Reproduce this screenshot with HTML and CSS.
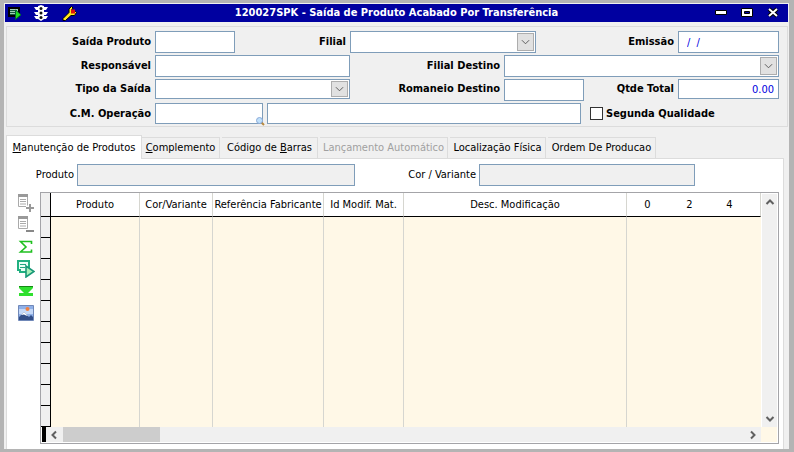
FILE: index.html
```html
<!DOCTYPE html>
<html lang="pt-BR">
<head>
<meta charset="utf-8">
<title>120027SPK - Saída de Produto Acabado Por Transferência</title>
<link rel="stylesheet" href="styles.css">
</head>
<body>
<main class="window">
  <header class="titlebar">
    <div class="title-tools">
      <button type="button" aria-label="Executar"><svg width="14" height="14" viewBox="0 0 14 14"><path d="M1 2h10v8H1z" fill="#9fd0b8" stroke="#000" stroke-width="2"/><path d="M2 4.500h7M2 6.500h6M2 8.500h5" stroke="#175c40"/><path d="M7.500 4v9.500l5.500-4.700z" fill="#1fe01f" stroke="#063"/></svg></button>
      <button type="button" aria-label="Semáforo"><svg width="14" height="16" viewBox="0 0 14 16"><path d="M4 1l3-1 3 1v1h4l-2 3h-2v2h4l-2 3h-2v1h4l-2 3h-2l-3 2-3-2H2l-2-3h4v-1H2L0 7h4V5H2L0 2h4z" fill="#fff"/><g fill="#111"><circle cx="7" cy="3.500" r="1.500"/><circle cx="7" cy="8" r="1.500"/><circle cx="7" cy="12.500" r="1.500"/></g></svg></button>
      <button type="button" aria-label="Configurar"><svg width="15" height="15" viewBox="0 0 15 15"><path d="M1 12.500L7 6.500V3l2.500-2.500L11 2 9.500 4v2.500H12l1.500-1 1 1-2 3H9L3.500 14.500H1z" fill="#ffe81c" stroke="#000"/><path d="M9 3.500h4v4H9z" fill="#e01010"/></svg></button>
    </div>
    <h1>120027SPK - Saída de Produto Acabado Por Transferência</h1>
    <div class="title-controls">
      <button type="button" aria-label="Minimizar"><svg width="12" height="12" viewBox="0 0 12 12"><path d="M.5 3.500h11v4H.5z" fill="#fff" stroke="#000"/></svg></button>
      <button type="button" aria-label="Maximizar"><svg width="12" height="12" viewBox="0 0 12 12"><path d="M.5 1.500h11v8H.5z" fill="#fff" stroke="#000"/><path d="M3.500 4.500h5v2h-5z" fill="#0000a0" stroke="#000"/></svg></button>
      <button type="button" aria-label="Fechar"><svg width="12" height="12" viewBox="0 0 12 12"><path d="M2 2l8 7M10 2l-8 7" stroke="#000" stroke-width="4"/><path d="M2 2l8 7M10 2l-8 7" stroke="#fff" stroke-width="2"/></svg></button>
    </div>
  </header>

  <form class="header-form">
    <div class="row row-first">
      <label for="saida">Saída Produto</label><input id="saida" type="text">
      <label for="filial">Filial</label>
      <div class="combo"><select id="filial"></select><svg width="10" height="6" viewBox="0 0 10 6"><path d="M1 1l4 4 4-4"/></svg></div>
      <label for="emissao">Emissão</label><input id="emissao" class="date" type="text" value="/  /">
    </div>
    <div class="row row-second">
      <label for="resp">Responsável</label><input id="resp" type="text">
      <label for="destino">Filial Destino</label>
      <div class="combo"><select id="destino"></select><svg width="10" height="6" viewBox="0 0 10 6"><path d="M1 1l4 4 4-4"/></svg></div>
    </div>
    <div class="row row-third">
      <label for="tipo">Tipo da Saída</label>
      <div class="combo"><select id="tipo"></select><svg width="10" height="6" viewBox="0 0 10 6"><path d="M1 1l4 4 4-4"/></svg></div>
      <label for="romaneio">Romaneio Destino</label><input id="romaneio" type="text">
      <label for="qtde">Qtde Total</label><input id="qtde" class="total" type="text" value="0.00">
    </div>
    <div class="row row-fourth">
      <label for="operacao">C.M. Operação</label>
      <div class="lookup"><input id="operacao" type="text"><svg width="9" height="9" viewBox="0 0 9 9"><path d="M5 5l3 3" stroke="#b88a40" stroke-width="2"/><circle cx="3.500" cy="3.500" r="3" fill="#bfe0fa" stroke="#8aa8d8"/></svg></div>
      <input type="text" aria-label="Descrição da operação">
      <div class="check"><input id="segunda" type="checkbox"><label for="segunda">Segunda Qualidade</label></div>
    </div>
  </form>

  <nav class="tabs" role="tablist">
    <button type="button" role="tab" class="tab active" aria-selected="true"><u>M</u>anutenção de Produtos</button>
    <button type="button" role="tab" class="tab tab-short"><u>C</u>omplemento</button>
    <button type="button" role="tab" class="tab tab-medium">Código de <u>B</u>arras</button>
    <button type="button" role="tab" class="tab tab-long" disabled>Lançamento Automático</button>
    <button type="button" role="tab" class="tab tab-medium">Localização Física</button>
    <button type="button" role="tab" class="tab tab-wide">Ordem De Producao</button>
  </nav>

  <section class="panel" role="tabpanel">
    <div class="filters">
      <label for="produto">Produto</label><input id="produto" type="text" readonly>
      <label for="cor">Cor / Variante</label><input id="cor" type="text" readonly>
    </div>
    <div class="workspace">
      <div class="tools">
        <button type="button" aria-label="Incluir"><svg width="18" height="18" viewBox="0 0 18 18"><path d="M1.500 2.500h9v10h-9z" fill="#fff" stroke="#aaa"/><path d="M1 1.500h10" stroke="#999" stroke-width="3"/><path d="M3 5.500h6M3 7.500h6M3 10h6" stroke="#aaa"/><path d="M9 13.500h8M13.500 9v8" stroke="#fff" stroke-width="4"/><path d="M9 14h8M13 10v8" stroke="#999" stroke-width="2"/></svg></button>
        <button type="button" aria-label="Excluir"><svg width="18" height="18" viewBox="0 0 18 18"><path d="M1.500 2.500h9v10h-9z" fill="#fff" stroke="#aaa"/><path d="M1 1.500h10" stroke="#999" stroke-width="3"/><path d="M3 5.500h6M3 7.500h6M3 10h6" stroke="#aaa"/><path d="M9 15h8" stroke="#888" stroke-width="2"/></svg></button>
        <button type="button" aria-label="Somar"><svg width="18" height="18" viewBox="0 0 18 18"><path d="M14.500 6V3.500h-11L9 9l-5.500 5h11v-2.500" fill="none" stroke="#20c020" stroke-width="1.600"/></svg></button>
        <button type="button" aria-label="Processar"><svg width="18" height="18" viewBox="0 0 18 18"><path d="M1 1h11v11H3V10H1z" fill="#e8fff5" stroke="#20b080" stroke-width="2"/><path d="M3 4.500h6M3 7.500h5" stroke="#20a880"/><path d="M9 6v11l8-5.500z" fill="#a8f0b8" stroke="#189878" stroke-width="1.600"/></svg></button>
        <button type="button" aria-label="Final"><svg width="18" height="18" viewBox="0 0 18 18"><path d="M2 4h14v2l-5 5h5v3H2v-3h5L2 6z" fill="#2fe02f"/><path d="M2 4h14v1H2z" fill="#158815"/></svg></button>
        <button type="button" aria-label="Imagem"><svg width="18" height="18" viewBox="0 0 18 18"><path d="M1.500 1.500h15v15h-15z" fill="#8fb0e8" stroke="#7088b8"/><path d="M2 5h14v5H2z" fill="#c4d8f8"/><circle cx="10.500" cy="5" r="2" fill="#f08040"/><path d="M2 13l5-5 5 5 2-2 2 2v3H2z" fill="#314d88"/><path d="M4 11l3-3 4 4-2-.5-2-1z" fill="#fff"/></svg></button>
      </div>
      <div class="grid">
        <div class="sheet">
          <table>
            <colgroup><col class="c-mark"><col class="c-prod"><col class="c-color"><col class="c-ref"><col class="c-id"><col><col class="c-zero"><col class="c-two"><col class="c-four"><col class="c-end"></colgroup>
            <thead><tr><th class="mark"></th><th>Produto</th><th>Cor/Variante</th><th>Referência Fabricante</th><th>Id Modif. Mat.</th><th>Desc. Modificação</th><th class="size">0</th><th class="size">2</th><th class="size">4</th><th></th></tr></thead>
            <tbody>
              <tr><td class="mark"></td><td></td><td></td><td></td><td></td><td></td><td class="size"></td><td class="size"></td><td class="size"></td><td class="size"></td></tr>
              <tr><td class="mark"></td><td></td><td></td><td></td><td></td><td></td><td class="size"></td><td class="size"></td><td class="size"></td><td class="size"></td></tr>
              <tr><td class="mark"></td><td></td><td></td><td></td><td></td><td></td><td class="size"></td><td class="size"></td><td class="size"></td><td class="size"></td></tr>
              <tr><td class="mark"></td><td></td><td></td><td></td><td></td><td></td><td class="size"></td><td class="size"></td><td class="size"></td><td class="size"></td></tr>
              <tr><td class="mark"></td><td></td><td></td><td></td><td></td><td></td><td class="size"></td><td class="size"></td><td class="size"></td><td class="size"></td></tr>
              <tr><td class="mark"></td><td></td><td></td><td></td><td></td><td></td><td class="size"></td><td class="size"></td><td class="size"></td><td class="size"></td></tr>
              <tr><td class="mark"></td><td></td><td></td><td></td><td></td><td></td><td class="size"></td><td class="size"></td><td class="size"></td><td class="size"></td></tr>
              <tr><td class="mark"></td><td></td><td></td><td></td><td></td><td></td><td class="size"></td><td class="size"></td><td class="size"></td><td class="size"></td></tr>
              <tr><td class="mark"></td><td></td><td></td><td></td><td></td><td></td><td class="size"></td><td class="size"></td><td class="size"></td><td class="size"></td></tr>
              <tr><td class="mark"></td><td></td><td></td><td></td><td></td><td></td><td class="size"></td><td class="size"></td><td class="size"></td><td class="size"></td></tr>
            </tbody>
          </table>
        </div>
        <div class="vscroll">
          <button type="button" aria-label="Rolar para cima"><svg width="10" height="8" viewBox="0 0 10 8"><path d="M1.500 6L5 2.500 8.500 6"/></svg></button>
          <button type="button" aria-label="Rolar para baixo"><svg width="10" height="8" viewBox="0 0 10 8"><path d="M1.500 2L5 5.500 8.500 2"/></svg></button>
        </div>
        <div class="hscroll">
          <button type="button" aria-label="Rolar para a esquerda"><svg width="8" height="10" viewBox="0 0 8 10"><path d="M6 1.500L2.500 5 6 8.500"/></svg></button>
          <div class="track"><div class="thumb"></div></div>
          <button type="button" aria-label="Rolar para a direita"><svg width="8" height="10" viewBox="0 0 8 10"><path d="M2 1.500L5.500 5 2 8.500"/></svg></button>
        </div>
        <div class="corner"></div>
      </div>
    </div>
  </section>
</main>
</body>
</html>
```
FILE: styles.css
```css
* { box-sizing: border-box; }

body {
  margin: 0;
  background: #b4b4b4;
  color: #000;
  font: 11px/14px "DejaVu Sans Condensed", "DejaVu Sans", sans-serif;
}

button, input, select { font: inherit; color: inherit; margin: 0; border-radius: 0; }
button { padding: 0; border: 0; background: none; }
svg { display: block; }

.window {
  min-height: 100vh;
  display: flex;
  flex-direction: column;
  border: solid #b4b4b4;
  border-width: 3px 5px 3px 4px;
  background: #f0f0f0;
}

.titlebar {
  display: grid;
  grid-template-columns: 1fr auto 1fr;
  align-items: center;
  height: 18px;
  margin: 1px 1px 0;
  background: #0000a0;
  color: #fff;
}
.titlebar h1 { margin: 0; font-size: 11px; font-weight: bold; }
.title-tools { display: flex; align-items: center; gap: 12px; padding-left: 3px; }
.title-tools button:last-child { margin-left: 2px; }
.title-controls { display: flex; justify-content: flex-end; gap: 14px; padding-right: 9px; }

.header-form {
  display: flex;
  flex-direction: column;
  gap: 2px;
  margin: 4px 1px 0 2px;
  padding: 4px 8px 2px 0;
  border: 1px solid #dcdcdc;
}
.row { display: grid; align-items: center; column-gap: 4px; }
.row-first { grid-template-columns: 144px 80px 107px 186fr 134fr 101px; }
.row-second { grid-template-columns: 144px 195px 146px 1fr; }
.row-third { grid-template-columns: 144px 195px 146px 80px 1fr 101px; align-items: start; }
.row-fourth { grid-template-columns: 144px 108px 314fr 194fr; }
.row label { font-weight: bold; text-align: right; white-space: nowrap; }
.row-third label { padding-top: 3px; }
.row input[type="text"], .combo select, .filters input {
  display: block;
  width: 100%;
  height: 22px;
  padding: 0 4px;
  border: 1px solid #7f9db9;
  background: #fff;
}
.combo { position: relative; }
.combo select { appearance: none; }
.combo svg {
  position: absolute;
  top: 2px;
  right: 2px;
  bottom: 2px;
  width: 17px;
  height: calc(100% - 4px);
  padding: 3px;
  border: 1px solid #adadad;
  background: #e1e1e1;
  pointer-events: none;
}
.combo path { fill: none; stroke: #505050; stroke-width: 1; }
.row input.date, .row input.total { color: #0000e0; white-space: pre; }
.row input.date { padding-left: 8px; }
.row input.total { text-align: right; }
.row-third input.total, .row-third select { height: 20px; }
.row-fourth input[type="text"] { height: 21px; }
.lookup { position: relative; }
.lookup svg { position: absolute; right: -2px; bottom: -2px; }
.check { display: flex; align-items: center; gap: 3px; padding-left: 5px; }
.check input {
  appearance: none;
  width: 13px;
  height: 13px;
  border: 1px solid #333;
  background: #fff;
}

.tabs { display: flex; align-items: flex-end; gap: 2px; margin: 8px 0 0 2px; }
.tab {
  height: 21px;
  border: solid #dcdcdc;
  border-width: 1px 1px 0 0;
  white-space: nowrap;
}
.tab.active {
  position: relative;
  width: 136px;
  height: 24px;
  margin: 0 -2px -1px 0;
  border-left-width: 1px;
  background: #fff;
}
.tab-short { width: 78px; }
.tab-medium { width: 96px; }
.tab-long { width: 128px; }
.tab-wide { width: 108px; }
.tab:disabled { color: #a0a0a0; }

.panel {
  flex: 1;
  display: flex;
  flex-direction: column;
  margin: 0 5px 0 2px;
  padding: 5px 4px 5px 0;
  border: solid #dcdcdc;
  border-width: 1px 1px 0;
  background: #fff;
}
.filters {
  display: grid;
  grid-template-columns: 67px 278fr 118fr 216fr 81fr;
  column-gap: 3px;
  align-items: center;
}
.filters label { text-align: right; white-space: nowrap; }
.filters input { background: #f0f0f0; }

.workspace { flex: 1; display: flex; margin-top: 6px; }
.tools { display: flex; flex-direction: column; gap: 4px; width: 33px; padding: 2px 0 0 10px; }

.grid {
  flex: 1;
  display: grid;
  grid-template: 1fr 15px / 1fr 17px;
  padding-bottom: 1px;
  border: 1px solid #a4a4a8;
}
.sheet { background: #fff8e7; }
table { width: 100%; border-collapse: separate; border-spacing: 0; table-layout: fixed; }
.c-mark { width: 10px; }
.c-prod { width: 89px; }
.c-color { width: 73px; }
.c-ref { width: 111px; }
.c-id { width: 80px; }
.c-zero { width: 41px; }
.c-two { width: 43px; }
.c-four { width: 37px; }
.c-end { width: 13px; }
th, td { padding: 0; border-right: 1px solid #d6d6d0; }
th {
  height: 24px;
  border-bottom: 1px solid #000;
  background: #fff;
  font-weight: normal;
  white-space: nowrap;
}
td { height: 21px; }
.size { border-right: 0; }
.mark { border-right: 1px solid #000; border-bottom: 1px solid #000; background: #f0f0f0; }

.vscroll, .hscroll { display: flex; justify-content: space-between; background: #f0f0f0; }
.vscroll { flex-direction: column; align-items: center; margin: 1px 1px 0; padding: 4px 0; }
.hscroll { align-items: center; margin-left: 1px; border-left: 4px solid #000; padding: 0 4px; }
.vscroll path, .hscroll path { fill: none; stroke: #606060; stroke-width: 2; }
.track { flex: 1; align-self: stretch; padding: 0 5px; }
.thumb { width: 97px; height: 100%; background: #cdcdcd; }
.corner { margin-right: 1px; background: #fff8e7; }
```
